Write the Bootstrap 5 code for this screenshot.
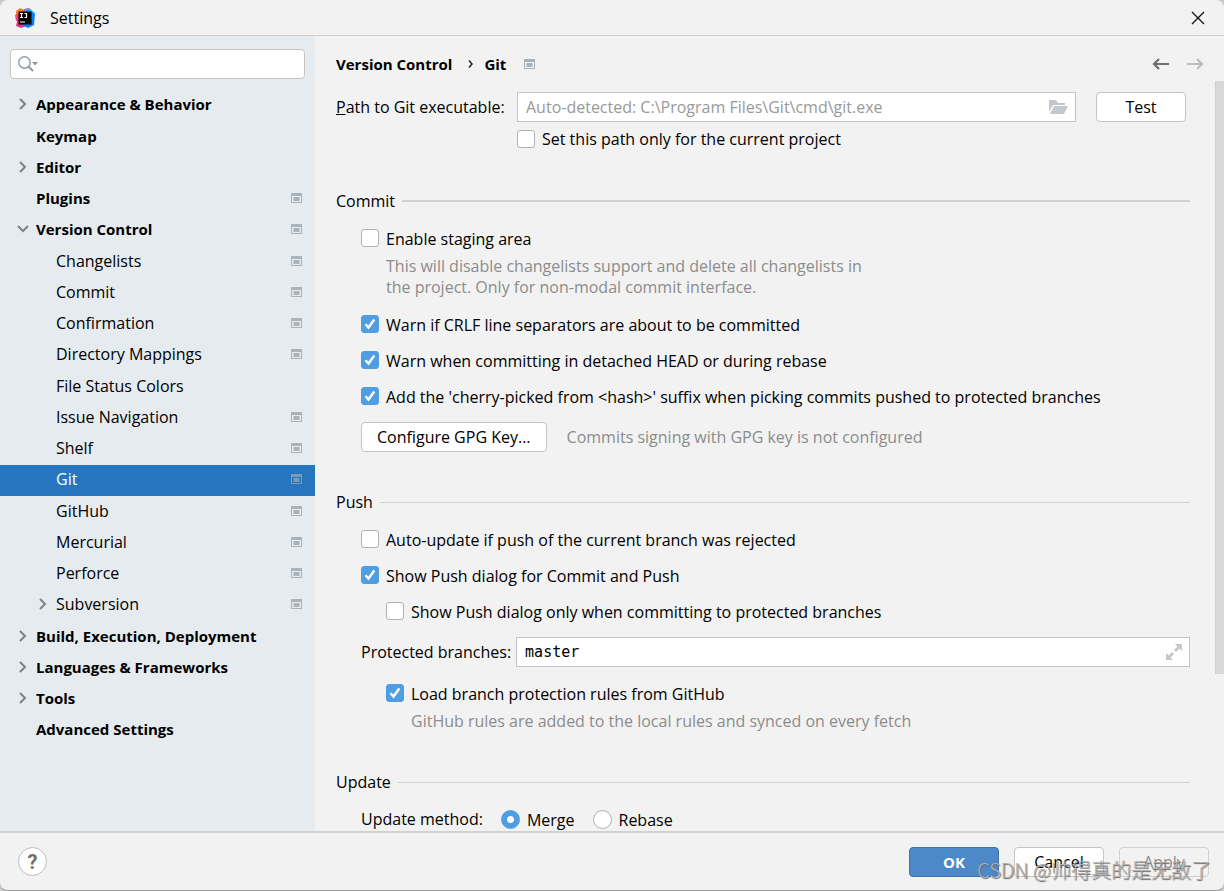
<!DOCTYPE html>
<html lang="en">
<head>
<meta charset="utf-8">
<meta name="viewport" content="width=device-width, initial-scale=1">
<title>Settings</title>
<link href="https://cdn.jsdelivr.net/npm/bootstrap@5.3.0/dist/css/bootstrap.min.css" rel="stylesheet">
<style>
  :root { --panel: #f2f2f2; --side: #e6ebef; --line: #d1d1d1; --edge: #c4c4c4; --accent: #4f9ee3; --hint: #8c8c8c; }
  body { background: #c9c9c9; font: 16px/20px "Open Sans", "Noto Sans CJK SC", sans-serif; color: #000; }
  .window { background: var(--panel); border-bottom: 1px solid #9b9b9b; border-radius: 8px; }
  .titlebar { height: 36px; padding: 0 19px 0 15px; border-bottom: 1px solid #cdd0d3; gap: 15px; }
  .plain-btn { border: 0; background: none; padding: 0; display: flex; }
  .sidebar { width: 315px; background: var(--side); }
  .search { height: 30px; margin: 13px 10px 11px; padding: 0 7px; background: #fff; border: 1px solid var(--edge); border-radius: 4px; }
  .bare { border: 0; outline: 0; background: none; min-width: 0; padding: 0; color: #000; }
  .bare::placeholder { color: #999; opacity: 1; }
  .tree a { height: 31px; padding: 0 13px 4px 36px; color: #000; text-decoration: none; display: flex; align-items: center; }
  .tree li:nth-child(4n+2) { margin-top: 1px; }
  .tree .top-item, .crumbs { font-size: 15px; font-weight: 700; }
  .tree .sub-item { padding-left: 56px; }
  .tree .selected { background: #2675bf; color: #fff; }
  .chev { width: 12px; height: 12px; margin: 0 7px 0 -19px; fill: none; stroke: #7f8284; stroke-width: 2; }
  .proj { width: 11px; height: 10px; color: #a9b3bb; }
  .selected .proj { color: #7f9bb4; }
  .pane { min-width: 0; }
  .pane-head { height: 45px; padding: 11px 20px 0 21px; }
  .crumb-sep { margin: 0 10px 0 16px; }
  .crumb-here { margin-right: 18px; }
  .form-area { padding: 11px 25px 0 21px; min-width: 0; }
  .thumb { width: 9px; height: 79%; flex: none; background: #d8d8d8; border-left: 1px solid #cfcfcf; }
  .git-path { display: grid; grid-template-columns: 181px 1fr 90px; align-items: center; row-gap: 7px; padding-right: 4px; }
  .git-path .field { margin-right: 20px; }
  .git-path .opt { grid-column: 2; }
  .field { height: 30px; background: #fff; border: 1px solid var(--edge); padding: 0 7px 0 8px; display: flex; align-items: center; }
  .dlg-btn { height: 30px; min-width: 90px; padding: 0 15px; font-size: 16px; line-height: 20px; background: #fff; border: 1px solid var(--edge); border-radius: 4px; color: #000; }
  .dlg-btn.primary { background: #4d89c9; border-color: #3d75b2; color: #fff; font-weight: 700; font-size: 15px; }
  .dlg-btn:disabled { background: transparent; color: #8c8c8c; border-color: #d0d0d0; }
  .opt { display: flex; align-items: center; gap: 7px; height: 20px; }
  .stack .opt span { padding-top: 2px; }
  .opt input { appearance: none; width: 18px; height: 18px; margin: 0; flex: none; border: 1px solid #b0b0b0; border-radius: 3px; background: #fff; }
  .opt input:checked { border-color: var(--accent); background: var(--accent) url("data:image/svg+xml,%3Csvg xmlns='http://www.w3.org/2000/svg' viewBox='0 0 16 16'%3E%3Cpath d='M3.5 8.2l3 3.3L12.3 3.5' fill='none' stroke='white' stroke-width='2.4'/%3E%3C/svg%3E") center/16px; }
  .opt input[type=radio] { border-radius: 50%; width: 19px; height: 19px; }
  .opt input[type=radio]:checked { background: radial-gradient(circle, #fff 3px, var(--accent) 4px); }
  .group { display: flex; align-items: center; gap: 7px; margin: 40px 0 17px; height: 20px; }
  .git-path + .group { margin-top: 42px; }
  .group h2 { font-size: 16px; line-height: 20px; font-weight: 400; margin: 0; }
  .group::after { content: ""; flex: 1; height: 1px; background: var(--line); }
  .git-path + .group::after { height: 2px; }
  .stack { display: flex; flex-direction: column; gap: 16px; padding-left: 25px; }
  .inset { padding-left: 25px; }
  .note { color: var(--hint); line-height: 21px; margin: 8px 0 0 25px; }
  .gpg-state { color: var(--hint); margin-left: 20px; }
  .branch-label { margin-right: 5px; }
  .methods { gap: 18px; }
  .mono { font-family: "DejaVu Sans Mono", monospace; font-size: 15px; }
  .footer-bar { height: 59px; border-top: 2px solid var(--line); padding: 0 15px 0 18px; gap: 15px; }
  .help { width: 29px; height: 29px; border-radius: 50%; border: 1px solid #bdbdbd; background: #fff; color: #6e6e6e; font: 700 20px/26px Roboto, sans-serif; padding: 0; }
  .watermark { position: absolute; right: 13px; bottom: 7px; font: 300 20px/26px "Noto Sans CJK SC", sans-serif; color: #b0b0b0; text-shadow: 1px 1px 1px #666; pointer-events: none; }
</style>
</head>
<body>
<svg class="d-none">
  <symbol id="proj" viewBox="0 0 11 10"><path d="M0 0h11v10H0zM1 3v6h9V3z" fill="currentColor" fill-rule="evenodd"/><path d="M2.500 4h6v4h-6z" fill="currentColor"/></symbol>
  <symbol id="right" viewBox="0 0 12 12"><path d="M3 1l5 5-5 5"/></symbol>
  <symbol id="down" viewBox="0 0 12 12"><path d="M1 3l5 5 5-5"/></symbol>
</svg>
<div class="window d-flex flex-column vh-100 overflow-hidden position-relative">
  <header class="titlebar d-flex align-items-center flex-shrink-0">
    <svg width="20" height="20" viewBox="0 0 20 20">
      <path d="M1 3L5 0l5 2-3 8-6-1z" fill="#fc801d"/><path d="M0 7l5-2 4 7-8 1z" fill="#fd3c78"/><path d="M3 10L1 18l5 2 8-3z" fill="#e3328e"/>
      <path d="M9 2l5-2 6 5-3 6z" fill="#14b5f8"/><path d="M16 4l4 2-1 11-6 3-6-3z" fill="#087cfa"/><path d="M9 1l5-1-2 5-4-1z" fill="#8878d8"/>
      <rect x="3.500" y="3.500" width="13" height="13"/><path d="M5 5.500h3M6.500 5.500v4M5 9.500h3M9.500 5.500h2v4h-2M5 14h5" stroke="#fff" stroke-width="1.200" fill="none"/>
    </svg>
    <span>Settings</span>
    <button class="plain-btn ms-auto" type="button" aria-label="Close"><svg width="14" height="14" viewBox="0 0 14 14"><path d="M1 1l12 12M13 1L1 13" stroke="#111" stroke-width="1.300"/></svg></button>
  </header>
  <div class="d-flex flex-fill overflow-hidden">
    <nav class="sidebar flex-shrink-0">
      <div class="search d-flex align-items-center">
        <svg width="22" height="18" viewBox="0 0 22 18"><circle cx="6.500" cy="7.500" r="5.700" fill="none" stroke="#8f979d" stroke-width="1.400"/><path d="M10.500 11.500l4.500 4.500" stroke="#8f979d" stroke-width="2"/><path d="M14 7h6l-3 3.500z" fill="#8f979d"/></svg>
        <input class="bare flex-fill" type="text" aria-label="Search settings">
      </div>
      <ul class="tree list-unstyled mb-0">
        <li><a href="#" class="top-item"><svg class="chev"><use href="#right"/></svg>Appearance &amp; Behavior</a></li>
        <li><a href="#" class="top-item">Keymap</a></li>
        <li><a href="#" class="top-item"><svg class="chev"><use href="#right"/></svg>Editor</a></li>
        <li><a href="#" class="top-item">Plugins<svg class="proj ms-auto"><use href="#proj"/></svg></a></li>
        <li><a href="#" class="top-item"><svg class="chev"><use href="#down"/></svg>Version Control<svg class="proj ms-auto"><use href="#proj"/></svg></a></li>
        <li><a href="#" class="sub-item">Changelists<svg class="proj ms-auto"><use href="#proj"/></svg></a></li>
        <li><a href="#" class="sub-item">Commit<svg class="proj ms-auto"><use href="#proj"/></svg></a></li>
        <li><a href="#" class="sub-item">Confirmation<svg class="proj ms-auto"><use href="#proj"/></svg></a></li>
        <li><a href="#" class="sub-item">Directory Mappings<svg class="proj ms-auto"><use href="#proj"/></svg></a></li>
        <li><a href="#" class="sub-item">File Status Colors</a></li>
        <li><a href="#" class="sub-item">Issue Navigation<svg class="proj ms-auto"><use href="#proj"/></svg></a></li>
        <li><a href="#" class="sub-item">Shelf<svg class="proj ms-auto"><use href="#proj"/></svg></a></li>
        <li><a href="#" class="sub-item selected" aria-current="page">Git<svg class="proj ms-auto"><use href="#proj"/></svg></a></li>
        <li><a href="#" class="sub-item">GitHub<svg class="proj ms-auto"><use href="#proj"/></svg></a></li>
        <li><a href="#" class="sub-item">Mercurial<svg class="proj ms-auto"><use href="#proj"/></svg></a></li>
        <li><a href="#" class="sub-item">Perforce<svg class="proj ms-auto"><use href="#proj"/></svg></a></li>
        <li><a href="#" class="sub-item"><svg class="chev"><use href="#right"/></svg>Subversion<svg class="proj ms-auto"><use href="#proj"/></svg></a></li>
        <li><a href="#" class="top-item"><svg class="chev"><use href="#right"/></svg>Build, Execution, Deployment</a></li>
        <li><a href="#" class="top-item"><svg class="chev"><use href="#right"/></svg>Languages &amp; Frameworks</a></li>
        <li><a href="#" class="top-item"><svg class="chev"><use href="#right"/></svg>Tools</a></li>
        <li><a href="#" class="top-item">Advanced Settings</a></li>
      </ul>
    </nav>
    <main class="pane flex-fill d-flex flex-column">
      <div class="pane-head d-flex align-items-center flex-shrink-0">
        <div class="crumbs d-flex align-items-center">
          <span>Version Control</span>
          <svg class="crumb-sep" width="6" height="10" viewBox="0 0 6 10"><path d="M1 1.500l3 3.500-3 3.500" fill="none" stroke="#222" stroke-width="1.500"/></svg>
          <span class="crumb-here">Git</span>
          <svg class="proj"><use href="#proj"/></svg>
        </div>
        <button class="plain-btn ms-auto me-3" type="button" aria-label="Back"><svg width="18" height="12" viewBox="0 0 18 12"><path d="M17 6H2M7 1L2 6l5 5" fill="none" stroke="#6e6e6e" stroke-width="2.200"/></svg></button>
        <button class="plain-btn" type="button" aria-label="Forward"><svg width="18" height="12" viewBox="0 0 18 12"><path d="M1 6h15M11 1l5 5-5 5" fill="none" stroke="#bdbdbd" stroke-width="2.200"/></svg></button>
      </div>
      <div class="d-flex flex-fill overflow-hidden">
        <form class="form-area flex-fill">
          <div class="git-path">
            <label for="path"><u>P</u>ath to Git executable:</label>
            <div class="field">
              <input id="path" class="bare flex-fill" type="text" placeholder="Auto-detected: C:\Program Files\Git\cmd\git.exe">
              <button class="plain-btn" type="button" aria-label="Browse"><svg width="19" height="14" viewBox="0 0 19 14"><path d="M0 0h7l2 3h7v2H4L0 12z" fill="#c3c8cc"/><path d="M5 6h14l-4 8H1z" fill="#c3c8cc"/></svg></button>
            </div>
            <button class="dlg-btn" type="button">Test</button>
            <label class="opt"><input type="checkbox"><span>Set this path only for the current project</span></label>
          </div>

          <div class="group"><h2>Commit</h2></div>
          <div class="stack">
            <div>
              <label class="opt"><input type="checkbox"><span>Enable staging area</span></label>
              <p class="note">This will disable changelists support and delete all changelists in<br>the project. Only for non-modal commit interface.</p>
            </div>
            <label class="opt"><input type="checkbox" checked><span>Warn if CRLF line separators are about to be committed</span></label>
            <label class="opt"><input type="checkbox" checked><span>Warn when committing in detached HEAD or during rebase</span></label>
            <label class="opt"><input type="checkbox" checked><span>Add the 'cherry-picked from &lt;hash&gt;' suffix when picking commits pushed to protected branches</span></label>
            <div class="d-flex align-items-center">
              <button class="dlg-btn" type="button">Configure GPG Key...</button>
              <span class="gpg-state">Commits signing with GPG key is not configured</span>
            </div>
          </div>

          <div class="group"><h2>Push</h2></div>
          <div class="stack">
            <label class="opt"><input type="checkbox"><span>Auto-update if push of the current branch was rejected</span></label>
            <label class="opt"><input type="checkbox" checked><span>Show Push dialog for Commit and Push</span></label>
            <label class="opt inset"><input type="checkbox"><span>Show Push dialog only when committing to protected branches</span></label>
            <div class="d-flex align-items-center">
              <label for="branches" class="branch-label">Protected branches:</label>
              <div class="field flex-fill">
                <input id="branches" class="bare flex-fill mono" type="text" value="master">
                <button class="plain-btn" type="button" aria-label="Expand"><svg width="16" height="16" viewBox="0 0 16 16"><path d="M9 0h7v7l-2.500-2.500L10 8 8 6l3.500-3.500zM0 9l2.500 2.500L6 8l2 2-3.500 3.500L7 16H0z" fill="#c3c8cc"/></svg></button>
              </div>
            </div>
            <div class="inset">
              <label class="opt"><input type="checkbox" checked><span>Load branch protection rules from GitHub</span></label>
              <p class="note">GitHub rules are added to the local rules and synced on every fetch</p>
            </div>
          </div>

          <div class="group"><h2>Update</h2></div>
          <div class="stack">
            <div class="methods d-flex">
              <span>Update method:</span>
              <label class="opt"><input type="radio" name="method" checked><span>Merge</span></label>
              <label class="opt"><input type="radio" name="method"><span>Rebase</span></label>
            </div>
          </div>
        </form>
        <div class="thumb"></div>
      </div>
    </main>
  </div>
  <footer class="footer-bar d-flex align-items-center flex-shrink-0">
    <button class="help me-auto" type="button" aria-label="Help">?</button>
    <button class="dlg-btn primary" type="button">OK</button>
    <button class="dlg-btn" type="button">Cancel</button>
    <button class="dlg-btn" type="button" disabled>Apply</button>
  </footer>
  <div class="watermark">CSDN @帅得真的是无敌了</div>
</div>
<script src="https://cdn.jsdelivr.net/npm/bootstrap@5.3.0/dist/js/bootstrap.bundle.min.js"></script>
</body>
</html>
